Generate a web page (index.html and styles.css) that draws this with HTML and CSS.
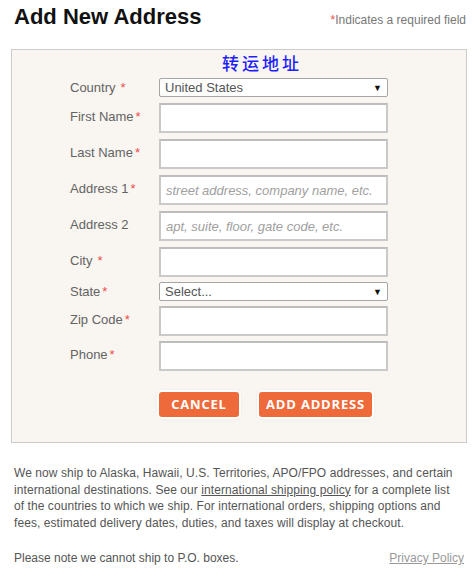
FILE: index.html
```html
<!DOCTYPE html>
<html>
<head>
<meta charset="utf-8">
<link rel="stylesheet" href="styles.css">
</head>
<body>
<div class="page">
  <div class="header">
    <h1 class="title">Add New Address</h1>
    <div class="req-note"><span class="star">*</span>Indicates a required field</div>
  </div>
  <div class="panel">
    <div class="cn-title">转运地址</div>
    <div class="form">
      <div class="row sel-row">
        <label class="label">Country<span class="star wide">*</span></label>
        <div class="select"><span>United States</span><span class="arrow">▼</span></div>
      </div>
      <div class="row">
        <label class="label">First Name<span class="star">*</span></label>
        <div class="input"></div>
      </div>
      <div class="row">
        <label class="label">Last Name<span class="star">*</span></label>
        <div class="input"></div>
      </div>
      <div class="row">
        <label class="label">Address 1<span class="star">*</span></label>
        <div class="input"><span class="ph">street address, company name, etc.</span></div>
      </div>
      <div class="row">
        <label class="label">Address 2</label>
        <div class="input"><span class="ph">apt, suite, floor, gate code, etc.</span></div>
      </div>
      <div class="row">
        <label class="label">City<span class="star wide">*</span></label>
        <div class="input"></div>
      </div>
      <div class="row sel-row">
        <label class="label">State<span class="star">*</span></label>
        <div class="select"><span>Select...</span><span class="arrow">▼</span></div>
      </div>
      <div class="row">
        <label class="label">Zip Code<span class="star">*</span></label>
        <div class="input"></div>
      </div>
      <div class="row">
        <label class="label">Phone<span class="star">*</span></label>
        <div class="input"></div>
      </div>
    </div>
    <div class="buttons">
      <button class="btn btn-cancel">CANCEL</button>
      <button class="btn btn-add">ADD ADDRESS</button>
    </div>
  </div>
  <p class="info">We now ship to Alaska, Hawaii, U.S. Territories, APO/FPO addresses, and certain international destinations. See our <a class="link" href="#">international shipping policy</a> for a complete list of the countries to which we ship. For international orders, shipping options and fees, estimated delivery dates, duties, and taxes will display at checkout.</p>
  <div class="footer">
    <span>Please note we cannot ship to P.O. boxes.</span>
    <a class="privacy" href="#">Privacy Policy</a>
  </div>
</div>
</body>
</html>
```

FILE: styles.css
```css
html, body {
  margin: 0;
  padding: 0;
  background: #ffffff;
}
body {
  font-family: "Liberation Sans", Arial, sans-serif;
  color: #555;
}
.page {
  padding: 0 7px 0 11px;
}
.header {
  display: flex;
  justify-content: space-between;
  align-items: baseline;
  height: 49px;
  padding-left: 3px;
  padding-right: 1px;
}
.title {
  margin: 0;
  padding-top: 5px;
  font-size: 22px;
  font-weight: bold;
  color: #111;
  line-height: 24px;
}
.req-note {
  font-size: 12px;
  color: #777;
}
.star {
  color: #ee4b4b;
  margin-left: 2px;
}
.star.wide {
  margin-left: 5px;
}
.req-note .star {
  margin-left: 0;
}
.panel {
  border: 1px solid #cccccc;
  background: #f9f6f1;
  height: 392px;
  box-sizing: content-box;
}
.cn-title {
  font-family: "Noto Sans CJK SC", sans-serif;
  font-weight: 500;
  color: #1e1eff;
  font-size: 17px;
  letter-spacing: 3px;
  line-height: 20px;
  padding-top: 3px;
  padding-left: 210px;
  height: 25px;
}
.form {
  padding-left: 58px;
  display: flex;
  flex-direction: column;
  gap: 6px;
}
.form .row:nth-child(n+7) {
  margin-top: -1px;
}
.row {
  display: grid;
  grid-template-columns: 89px 229px;
}
.label {
  font-size: 13px;
  line-height: 15px;
  color: #636363;
  padding-top: 6px;
}
.sel-row .label {
  padding-top: 2px;
}
.input {
  height: 30px;
  box-sizing: border-box;
  border: 2px solid #c9c9c9;
  border-top-color: #bdbdbd;
  background: #fff;
  padding: 0 5px;
  display: flex;
  align-items: center;
}
.ph {
  font-size: 13px;
  font-style: italic;
  color: #a0a0a0;
  white-space: nowrap;
}
.select {
  height: 19px;
  box-sizing: border-box;
  border: 1px solid #a6a6a6;
  border-radius: 2px;
  background: #fff;
  display: flex;
  justify-content: space-between;
  align-items: center;
  padding: 0 5px 0 5px;
  font-size: 13px;
  color: #555;
}
.arrow {
  font-size: 9px;
  color: #111;
}
.buttons {
  display: flex;
  gap: 20px;
  padding-left: 147px;
  padding-top: 21px;
}
.btn {
  font-family: "Open Sans", sans-serif;
  font-weight: 700;
  font-size: 13px;
  letter-spacing: 0.8px;
  color: #fff;
  background: #ee6a3b;
  border: none;
  border-radius: 3px;
  height: 25px;
  padding: 0;
  box-shadow: 0 0 0 2px #ffffff, 0 0 2px 2px rgba(0,0,0,0.08);
  line-height: 25px;
}
.btn-cancel {
  width: 80px;
}
.btn-add {
  width: 113px;
}
.info {
  margin: 22px 0 0 3px;
  font-size: 12px;
  letter-spacing: 0.07px;
  line-height: 16.5px;
  color: #555;
  padding-right: 10px;
}
.link {
  color: #555;
  text-decoration: underline;
}
.footer {
  display: flex;
  justify-content: space-between;
  margin-top: 20px;
  padding-left: 3px;
  padding-right: 3px;
  font-size: 12px;
  color: #555;
}
.privacy {
  color: #999;
  text-decoration: underline;
}
```
